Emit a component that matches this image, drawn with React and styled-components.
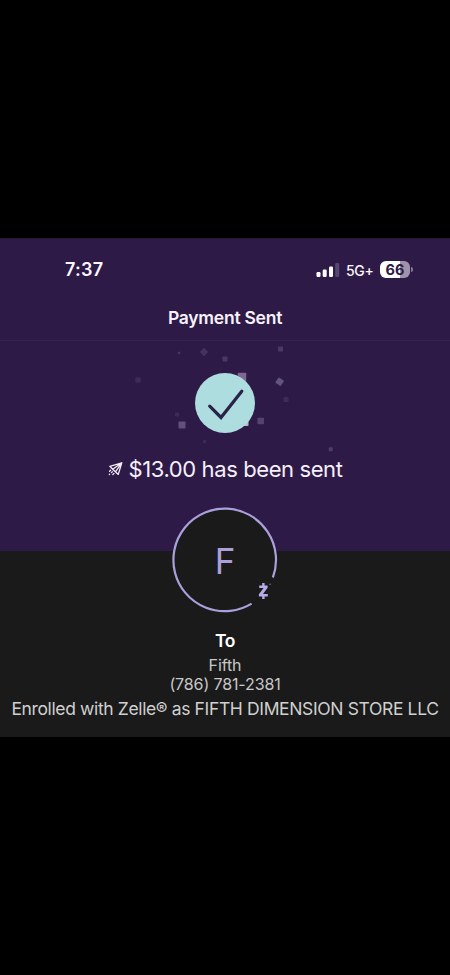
import React from 'react';
import styled, { createGlobalStyle } from 'styled-components';

const GlobalStyle = createGlobalStyle`
  *, *::before, *::after { box-sizing: border-box; }
  body { margin: 0; background: #000; }
`;

const Page = styled.main`
  width: 100%;
  min-height: 975px;
  padding: 238px 0;
  background: #000;
  font-family: Inter, "Liberation Sans", sans-serif;
`;

const StatusBar = styled.header`
  display: flex;
  align-items: center;
  justify-content: space-between;
  height: 62px;
  padding: 0 37px 0 65px;
  border-top: 1px solid #241634;
  background: #2e1a47;
  color: #fbf7fd;
`;

const Clock = styled.time`
  font-size: 18px;
  font-weight: 600;
  letter-spacing: 0.25px;
`;

const StatusIcons = styled.div`
  display: flex;
  align-items: center;
`;

const Network = styled.span`
  width: 27px;
  margin: 1px 7px 0 6px;
  font-size: 14px;
  font-weight: 500;
  letter-spacing: -0.3px;
  white-space: nowrap;
`;

const Battery = styled.span`
  width: 30px;
  height: 17px;
  border-radius: 6px;
  background: linear-gradient(90deg, #fff 66%, #9e93ab 66%);
  color: #2e1a47;
  font-size: 14.5px;
  font-weight: 700;
  line-height: 17px;
  text-align: center;
`;

const BatteryTip = styled.span`
  width: 2px;
  height: 5px;
  margin-left: 1px;
  border-radius: 0 2px 2px 0;
  background: #85789a;
`;

const TitleBar = styled.div`
  height: 41px;
  border-bottom: 1px solid #36234e;
  background: #2e1a47;
`;

const Title = styled.h1`
  margin: 0;
  color: #f8f3fb;
  font-size: 17.5px;
  font-weight: 600;
  letter-spacing: -0.25px;
  line-height: 36px;
  text-align: center;
`;

const Hero = styled.section`
  position: relative;
  display: flex;
  flex-direction: column;
  align-items: center;
  height: 210px;
  padding-top: 32px;
  background: #2e1a47;
`;

const Confetti = styled.svg`
  position: absolute;
  inset: 0;
`;

const SuccessMark = styled.svg`
  position: relative;
  display: block;
`;

const Amount = styled.p`
  position: relative;
  display: flex;
  align-items: center;
  gap: 6px;
  height: 31px;
  margin: 20px 0 0;
  color: #f6f0fa;
  font-size: 22px;
  letter-spacing: -0.4px;
  white-space: nowrap;
`;

const Recipient = styled.section`
  position: relative;
  display: flex;
  flex-direction: column;
  align-items: center;
  height: 186px;
  background: #1a1a1a;
`;

const Avatar = styled.div`
  display: grid;
  place-items: center;
  flex: none;
  width: 106px;
  height: 106px;
  margin-top: -44px;
  color: #a9a0dc;
  font-size: 35px;
  line-height: 1;

  > * { grid-area: 1 / 1; }
`;

const Initial = styled.span`
  padding-top: 2px;
`;

const Label = styled.h2`
  margin: 15px 0 3px;
  color: #fff;
  font-size: 17.5px;
  font-weight: 600;
  letter-spacing: -0.4px;
  line-height: 25px;
`;

const Detail = styled.div`
  color: #c8c8c8;
  font-size: 16px;
  letter-spacing: -0.12px;
  line-height: 19px;
  white-space: nowrap;
`;

const Enrollment = styled.div`
  margin-top: 3px;
  color: #d0d0d0;
  font-size: 17.5px;
  letter-spacing: -0.36px;
  line-height: 23px;
  white-space: nowrap;
`;

const pieces = [
  { x: 179, y: 353, s: 2.5, c: '#49355f' },
  { x: 204, y: 352, s: 6, c: '#463260', r: 45 },
  { x: 225, y: 359, s: 5, c: '#4b3965' },
  { x: 280.5, y: 349, s: 5, c: '#4b3965' },
  { x: 138, y: 380, s: 5.5, c: '#3f2b58' },
  { x: 242, y: 377, s: 8.5, c: '#7f6792' },
  { x: 279.7, y: 381.7, s: 6.5, c: '#62547d', r: 35 },
  { x: 286, y: 399.5, s: 5, c: '#3f2b58' },
  { x: 177, y: 414.5, s: 4, c: '#3f2b58' },
  { x: 182, y: 425, s: 7, c: '#62517a' },
  { x: 260.7, y: 421, s: 6.5, c: '#56426f' },
  { x: 246, y: 423.5, s: 5, c: '#b5b9cb' },
  { x: 204.5, y: 441.5, s: 3.5, c: '#3d2956' },
  { x: 330.7, y: 449.3, s: 4, c: '#513c69' },
];

function SignalIcon() {
  return (
    <svg width="24" height="14" viewBox="0 0 24 14" fill="#fff">
      <rect x="0.5" y="9" width="4" height="5" rx="1.2" />
      <rect x="6.7" y="6.5" width="4" height="7.5" rx="1.2" />
      <rect x="13" y="3.5" width="4" height="10.5" rx="1.2" />
      <rect x="19.2" y="0" width="4" height="14" rx="1.2" fill="#584671" />
    </svg>
  );
}

function SendIcon() {
  return (
    <svg width="15" height="16" viewBox="0 0 15 16" fill="none" stroke="#f3edf8" strokeWidth="1.3" strokeLinejoin="round" strokeLinecap="round">
      <path d="M13.8 1.8 1.8 5.3 4.7 8.2 7.4 10.8 10.3 13.4 13.8 1.8ZM13.8 1.8 4.7 8.2M13.8 1.8 7.4 10.8" />
      <path d="M2.6 9.2 1.6 10.2M4.3 10.8 3.5 11.6M1.6 13.3 1.3 13.6M6 12.4 4.9 13.5" />
    </svg>
  );
}

function AvatarRing() {
  return (
    <svg width="106" height="106" viewBox="0.4 0 106 106">
      <circle cx="53" cy="53" r="52" fill="#1a1a1a" />
      <path d="M101.3 70.5A51.3 51.3 0 1 0 80 96.6" fill="none" stroke="#a9a0dc" strokeWidth="2.2" />
      <path d="M87.6 78.4H96V80.7L91.4 86.9H96.2V89.4H87.3V87.2L92 80.9H87.6Z" fill="#b5ace9" />
      <path d="M90.6 76H93V79H90.6ZM90.6 89H93V92H90.6Z" fill="#b5ace9" />
      <circle cx="98.5" cy="77.3" r="0.8" fill="#777191" />
    </svg>
  );
}

export default function App() {
  return (
    <>
      <GlobalStyle />
      <Page>
        <StatusBar>
          <Clock>7:37</Clock>
          <StatusIcons>
            <SignalIcon />
            <Network>5G+</Network>
            <Battery>66</Battery>
            <BatteryTip />
          </StatusIcons>
        </StatusBar>
        <TitleBar>
          <Title>Payment Sent</Title>
        </TitleBar>
        <Hero>
          <Confetti width="450" height="210" viewBox="0 341 450 210">
            {pieces.map(({ x, y, s, c, r = 0 }) => (
              <rect key={`${x}-${y}`} x={x - s / 2} y={y - s / 2} width={s} height={s} rx="0.8" fill={c} transform={`rotate(${r} ${x} ${y})`} />
            ))}
          </Confetti>
          <SuccessMark width="60" height="60" viewBox="0 0 60 60">
            <circle cx="30" cy="30" r="30" fill="#addddf" />
            <path d="M14.7 33.2 26 44.5 46.8 18.3" fill="none" stroke="#282347" strokeWidth="3.2" strokeLinecap="round" />
          </SuccessMark>
          <Amount>
            <SendIcon />
            <span>$13.00 has been sent</span>
          </Amount>
        </Hero>
        <Recipient>
          <Avatar>
            <AvatarRing />
            <Initial>F</Initial>
          </Avatar>
          <Label>To</Label>
          <Detail>Fifth</Detail>
          <Detail>(786) 781-2381</Detail>
          <Enrollment>Enrolled with Zelle® as FIFTH DIMENSION STORE LLC</Enrollment>
        </Recipient>
      </Page>
    </>
  );
}
